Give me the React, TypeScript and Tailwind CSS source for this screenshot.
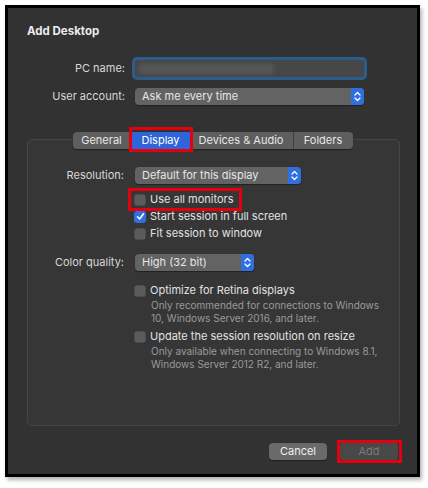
import React from "react";

const Stepper = () => (
  <div className="w-[13px] h-full bg-[#2f6fe0] rounded-r-[4px] flex items-center justify-center">
    <svg width="7" height="11" viewBox="0 0 7 11" fill="none">
      <path d="M1 4L3.5 1.5L6 4" stroke="white" strokeWidth="1.3" strokeLinecap="round" strokeLinejoin="round" />
      <path d="M1 7L3.5 9.5L6 7" stroke="white" strokeWidth="1.3" strokeLinecap="round" strokeLinejoin="round" />
    </svg>
  </div>
);

const Select = ({ label, w }: { label: string; w: string }) => (
  <div className={`${w} h-[17px] rounded-[4px] bg-[#636363] flex items-stretch shadow-[0_0.5px_1px_rgba(0,0,0,0.4)]`}>
    <div className="flex-1 pl-[7px] text-[11px] leading-[17px] text-[#e6e6e6]">{label}</div>
    <Stepper />
  </div>
);

const Check = ({ checked = false }: { checked?: boolean }) =>
  checked ? (
    <div className="w-[12px] h-[12px] rounded-[3px] bg-[#2f6fe0] flex items-center justify-center">
      <svg width="9" height="9" viewBox="0 0 9 9" fill="none">
        <path d="M1.5 4.8L3.6 7L7.5 1.8" stroke="white" strokeWidth="1.6" strokeLinecap="round" strokeLinejoin="round" />
      </svg>
    </div>
  ) : (
    <div className="w-[12px] h-[12px] rounded-[3px] bg-[#5b5b5b] shadow-[inset_0_0_0_0.5px_rgba(0,0,0,0.3)]" />
  );

export default function App() {
  return (
    <div
      className="w-[428px] h-[488px] bg-white pt-[5px] pl-[5px]"
      style={{ fontFamily: "Inter, 'Liberation Sans', sans-serif" }}
    >
      <div className="w-[415px] h-[472px] border-[3px] border-black bg-[#323232] shadow-[2px_3px_4px_rgba(0,0,0,0.3)] flex flex-col">
        <div className="pl-[19px] pt-[15px] text-[11.5px] leading-[16px] font-bold text-[#ececec]">Add Desktop</div>

        {/* PC name */}
        <div className="mt-[18px] flex items-center h-[23px]">
          <div className="w-[117px] text-right text-[11px] text-[#d8d8d8]">PC name:</div>
          <div className="ml-[7px] w-[235px] h-[23px] rounded-[5px] bg-[#2b5c8e] p-[3px]">
            <div className="w-full h-full rounded-[2px] bg-[#474747] flex items-center px-[4px]">
              <div className="w-[135px] h-[10px] rounded-[2px] bg-[#575757] blur-[2px]" />
            </div>
          </div>
        </div>

        {/* User account */}
        <div className="mt-[8px] flex items-center">
          <div className="w-[117px] text-right text-[11px] text-[#d8d8d8]">User account:</div>
          <div className="ml-[10px]">
            <Select label="Ask me every time" w="w-[229px]" />
          </div>
        </div>

        {/* Tabs + group */}
        <div className="mt-[27px] relative z-10 flex justify-center">
          <div className="flex h-[17px] rounded-[4px] bg-[#5e5e5e] text-[11px] leading-[17px] text-[#e6e6e6] shadow-[0_0.5px_1px_rgba(0,0,0,0.4)]">
            <div className="w-[59px] text-center border-r border-[#3e3e3e]">General</div>
            <div className="relative w-[58px] text-center bg-[#2f65d8] text-white">
              Display
              <span className="absolute -left-[3px] -top-[5px] -right-[3px] -bottom-[3px] border-[3px] border-[#e3000f]" />
            </div>
            <div className="w-[104px] text-center border-r border-[#3e3e3e]">Devices &amp; Audio</div>
            <div className="w-[59px] text-center">Folders</div>
          </div>
        </div>
        <div className="-mt-[10px] ml-[19px] w-[373px] h-[287px] rounded-[5px] border border-[#464646] bg-[#363636] pt-[27px] flex flex-col">
          <div className="flex items-center">
            <div className="w-[96px] text-right text-[11px] text-[#d8d8d8]">Resolution:</div>
            <div className="ml-[11px]">
              <Select label="Default for this display" w="w-[166px]" />
            </div>
          </div>

          <div className="mt-[7px] pl-[106px] flex flex-col text-[11px] text-[#e2e2e2]">
            <div className="relative h-[17px] flex items-center gap-[4px]">
              <span className="absolute -left-[6px] -top-[3px] w-[114px] h-[23px] border-[3px] border-[#e3000f]" />
              <Check />
              <span>Use all monitors</span>
            </div>
            <div className="h-[17px] flex items-center gap-[4px]">
              <Check checked />
              <span>Start session in full screen</span>
            </div>
            <div className="h-[17px] flex items-center gap-[4px]">
              <Check />
              <span>Fit session to window</span>
            </div>
          </div>

          <div className="mt-[12px] flex items-center">
            <div className="w-[96px] text-right text-[11px] text-[#d8d8d8]">Color quality:</div>
            <div className="ml-[11px]">
              <Select label="High (32 bit)" w="w-[119px]" />
            </div>
          </div>

          <div className="mt-[12px] pl-[106px] flex flex-col">
            <div className="h-[15px] flex items-center gap-[4px] text-[11px] text-[#e2e2e2]">
              <Check />
              <span>Optimize for Retina displays</span>
            </div>
            <div className="pl-[17px] pt-[1px] text-[10px] leading-[13px] text-[#9a9a9a]">
              Only recommended for connections to Windows
              <br />
              10, Windows Server 2016, and later.
            </div>
            <div className="mt-[4px] h-[15px] flex items-center gap-[4px] text-[11px] text-[#e2e2e2]">
              <Check />
              <span>Update the session resolution on resize</span>
            </div>
            <div className="pl-[17px] pt-[1px] text-[10px] leading-[12.5px] text-[#9a9a9a]">
              Only available when connecting to Windows 8.1,
              <br />
              Windows Server 2012 R2, and later.
            </div>
          </div>
        </div>

        {/* Buttons */}
        <div className="mt-[17px] pr-[19px] flex justify-end gap-[13px]">
          <div className="w-[58px] h-[17px] rounded-[4px] bg-[#6a6a6a] text-center text-[11px] leading-[17px] text-[#f0f0f0] shadow-[0_0.5px_1px_rgba(0,0,0,0.4)]">
            Cancel
          </div>
          <div className="relative w-[58px] h-[17px] rounded-[3px] bg-[#484848] text-center text-[11px] leading-[17px] text-[#7a7a7a]">
            Add
            <span className="absolute -left-[3px] -top-[3px] -right-[4px] -bottom-[3px] border-[3px] border-[#e3000f]" />
          </div>
        </div>
      </div>
    </div>
  );
}
